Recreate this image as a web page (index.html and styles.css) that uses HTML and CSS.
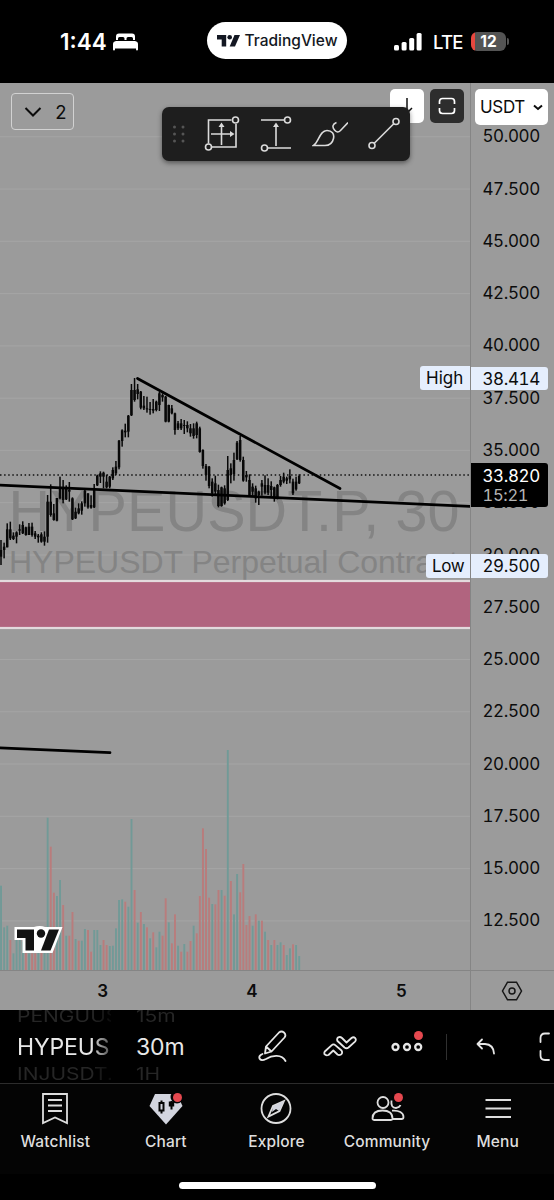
FILE: index.html
```
<!DOCTYPE html>
<html lang="en">
<head>
<meta charset="utf-8">
<title>HYPEUSDT.P</title>
<link rel="stylesheet" href="styles.css">
</head>
<body>
<div class="phone">
    <div class="status">
        <div class="clock">1:44
            <svg class="solid" width="25" height="18" viewBox="0 0 25 18"><path d="M3 7V3.500Q3 .5 6 .5H19Q22 .5 22 3.500V7H20V5.500Q20 4 18.500 4H15Q13.500 4 13.500 5.500V7H11.500V5.500Q11.500 4 10 4H6.500Q5 4 5 5.500V7Z"/><path d="M3 8H22Q25 8.500 25 11V16.500Q25 17.500 24 17.500Q23 17.500 23 16.500V15.500H2V16.500Q2 17.500 1 17.500Q0 17.500 0 16.500V11Q0 8.500 3 8Z"/></svg>
        </div>
        <div class="pill">
            <svg class="solid" width="23" height="12" viewBox="0 0 23 12"><path d="M0 0H9.200V11.500H4.700V4.500H0Z"/><circle cx="12.700" cy="2.300" r="2.300"/><path d="M17.500 0H23L18 11.500H12.700Z"/></svg>
            <span>TradingView</span>
        </div>
        <div class="signal">
            <svg class="solid" width="28" height="18" viewBox="0 0 28 18"><rect y="12" width="5" height="5.500" rx="1.500"/><rect x="7.600" y="9" width="5" height="8.500" rx="1.500"/><rect x="15.200" y="5" width="5" height="12.500" rx="1.500"/><rect x="22.600" y="0" width="5" height="17.500" rx="1.500"/></svg>
            <span>LTE</span>
            <div class="battery">12</div>
        </div>
    </div>

    <div class="chart">
        <div class="pane">
            <!-- drawn in screen coordinates, the pane starts at y = 83 -->
            <svg id="plot" width="470" height="887" viewBox="0 83 470 887">
                <g id="grid" stroke="#a5a5a5" stroke-width="1"></g>
                <g class="watermark">
                    <text x="8.500" y="531" font-size="57.500" textLength="451">HYPEUSDT.P, 30</text>
                    <text x="9" y="573" font-size="32" textLength="449">HYPEUSDT Perpetual Contract</text>
                </g>
                <rect x="-5" y="581" width="480" height="47" fill="#b1647f" stroke="#e3dadd" stroke-width="2.200"/>
                <g id="volume"></g>
                <path d="M0 475H470" stroke="#111" stroke-width="1.400" stroke-dasharray="1.500 2.600"/>
                <g id="candles"></g>
                <g stroke="#000" stroke-width="2.700" stroke-linecap="round">
                    <path d="M137.500 378.500L340 488.500"/>
                    <path d="M-2 485L470 506.300"/>
                    <path d="M-2 747.800L110 752.600"/>
                </g>
                <path d="M14.500 927H34Q40 925 45 927H62.500L52.500 953H22.500V940H14.500Z" fill="#fff"/>
                <g fill="#131313"><path d="M17 929.500H34V950.500H25.500V938H17Z"/><circle cx="41" cy="933.500" r="4.200"/><path d="M49 929.500H59L50.500 950.500H41Z"/></g>
            </svg>
            <button class="collapse"><svg width="18" height="12" viewBox="0 0 18 12"><path d="M1.500 2L9 9.500L16.500 2"/></svg>2</button>
            <button class="square down"><svg width="16" height="18" viewBox="0 0 16 18"><path d="M8 1V16M3 11L8 16L13 11"/></svg></button>
            <button class="square full"><svg width="18" height="18" viewBox="0 0 18 18"><path d="M1.500 7V4.500Q1.500 1.500 4.500 1.500H13.500Q16.500 1.500 16.500 4.500V7M1.500 11V13.500Q1.500 16.500 4.500 16.500H13.500Q16.500 16.500 16.500 13.500V11"/></svg></button>
            <span class="tag high">High</span>
            <span class="tag low">Low</span>
            <div class="tools">
                <svg class="grip" width="14" height="20" viewBox="0 0 14 20"><circle cx="2.500" cy="3" r="1.500"/><circle cx="11" cy="3" r="1.500"/><circle cx="2.500" cy="10" r="1.500"/><circle cx="11" cy="10" r="1.500"/><circle cx="2.500" cy="17" r="1.500"/><circle cx="11" cy="17" r="1.500"/></svg>
                <svg width="36" height="36" viewBox="0 0 36 36"><path d="M27.500 4H4.500V27.500M8 31H32V8M17.500 29V10M7 18H27"/><circle cx="31.500" cy="4" r="3"/><circle cx="4.500" cy="31" r="3"/><path class="tip" d="M14.500 11L17.500 6.500L20.500 11ZM26 15L30.500 18L26 21Z"/></svg>
                <svg width="36" height="36" viewBox="0 0 36 36"><path d="M3 4H26M9 32H33M18 30V10"/><circle cx="29.500" cy="4" r="3"/><circle cx="6.500" cy="32" r="3"/><path class="tip" d="M15 11L18 6.500L21 11Z"/></svg>
                <svg width="36" height="36" viewBox="0 0 36 36"><path d="M1.500 29.500C7 26 7.500 14.500 15 14.500C20 14.500 22.500 18 21.500 22.500C20.500 27 17 29.500 13 29.500ZM24.500 6.500C20.500 8 20 11 22.500 14C24.500 16.500 26.500 16.500 28.500 14.500L36 6.500"/></svg>
                <svg width="36" height="36" viewBox="0 0 36 36"><path d="M8 27.500L28 7.500"/><circle cx="6" cy="29.500" r="3"/><circle cx="30" cy="5.500" r="3"/></svg>
            </div>
        </div>
        <div class="scale">
            <div class="prices" id="prices"></div>
            <button class="currency">USDT<svg width="10" height="7" viewBox="0 0 10 7"><path d="M1 1.500L5 5L9 1.500"/></svg></button>
            <span class="tag pr p-high">38.414</span>
            <span class="tag pr p-low">29.500</span>
            <div class="last">33.820<small>15:21</small></div>
        </div>
        <div class="days"><b>3</b><b>4</b><b>5</b></div>
        <div class="gear"><svg width="22" height="20" viewBox="0 0 22 20"><path d="M6.500 1.200H15.500L20.500 10L15.500 18.800H6.500L1.500 10Z"/><circle cx="11" cy="10" r="3"/></svg></div>
    </div>

    <div class="bar">
        <div class="wheel symbols"><i>PENGUUSDT</i><span>HYPEUSDT</span><i>INJUSDT.P</i></div>
        <div class="wheel times"><i>15m</i><span>30m</span><i>1H</i></div>
        <svg class="pencil" width="30" height="32" viewBox="0 0 30 32"><path d="M7 23.500L8 16.500L21 2.500Q23.500 .5 26 2.500Q28.500 5 26.500 7.500L13.500 21.500ZM8 16.500L13.500 21.500M4.500 24Q.5 25.500 1.500 28.500Q3 31.500 8 29C14 25 24 24 27.500 31"/></svg>
        <svg class="waves" width="34" height="21" viewBox="0 0 34 21"><path d="M1.800 15.500L8.500 9.300Q10.500 7.500 12.500 9.300L18.500 14.500Q20 17 18 18.500Q16 19.700 14.500 18.500L10.300 14.500L5.500 19Q3 20 1.500 18.200Q1 16.700 1.800 15.500ZM14.500 5Q13.500 3 15 1.500Q17 .3 19 2L23.500 6.500L28.500 2Q30.500 .5 32.300 2.200Q33.500 4 32 5.700L25.500 11.500Q23.500 13 21.500 11.500Z"/></svg>
        <div class="dots"><svg width="32" height="10" viewBox="0 0 32 10"><circle cx="4.500" cy="5" r="3"/><circle cx="16" cy="5" r="3"/><circle cx="27.200" cy="5" r="3"/></svg><em class="badge"></em></div>
        <div class="sep"></div>
        <svg class="undo" width="20" height="17" viewBox="0 0 20 17"><path d="M6 1.500L1.500 6L6 10.500M1.500 6H9Q17.500 6.500 18 15.500"/></svg>
        <svg class="expand" width="30" height="30" viewBox="0 0 30 30"><path d="M1.500 10V6Q1.500 1.500 6 1.500H10M1.500 19V23.500Q1.500 28 6 28H10"/></svg>
    </div>

    <div class="nav">
        <a><svg width="36" height="34" viewBox="0 0 36 34"><path d="M6 2H30V31L18 25.500L6 31ZM11 8H25M11 13.500H25M11 19H25"/></svg>Watchlist</a>
        <a><svg width="36" height="34" viewBox="0 0 36 34"><path class="fill" d="M7 2H29L34.500 14L18 32.500L1.500 14Z"/><path class="cut" d="M11.500 11H15.500V18.500H11.500ZM13.500 8.500V11M13.500 18.500V21.500M23.500 9V17.500"/><path class="cut dark" d="M21.800 10.500H25.200V13.500H21.800Z"/><circle class="dark" cx="29" cy="5" r="6.500"/></svg>Chart<em class="badge"></em></a>
        <a><svg width="36" height="34" viewBox="0 0 36 34"><circle cx="18" cy="16.500" r="14.500"/><path d="M26 9L21.500 19L10.500 24.500L15 14Z"/><path class="fill" d="M26 9L21 19L18 17L14 20L15 14Z"/></svg>Explore</a>
        <a><svg width="36" height="34" viewBox="0 0 36 34"><circle cx="14" cy="10.500" r="5.500"/><path d="M3.500 26.500C3.500 21 7 18.500 13.500 18.500S23.500 21 23.500 26.500Q23.500 28 22 28H5.500Q3.500 28 3.500 26.500ZM22.500 8.500Q21.500 16 27 16Q30.500 15.500 31.500 13M23 18.700C30 18 34.500 21 34.500 25Q34.500 27 32.500 27H24"/><circle class="dark" cx="29" cy="5" r="6"/></svg>Community<em class="badge"></em></a>
        <a><svg width="36" height="34" viewBox="0 0 36 34"><path d="M5.500 8H31M5.500 16.500H31M5.500 25H31"/></svg>Menu</a>
    </div>
    <div class="home"></div>
</div>
<script src="chart.js"></script>
</body>
</html>
```
FILE: styles.css
```
* { box-sizing: border-box; }
body {
    margin: 0;
    background: #000;
    font-family: Inter, "Liberation Sans", sans-serif;
}
button { border: 0; padding: 0; font: inherit; }
svg { display: block; fill: none; flex: none; }
.solid { fill: currentColor; }
.phone {
    width: 554px;
    height: 1200px;
    overflow: hidden;
    display: flex;
    flex-direction: column;
    color: #fff;
}

/* status bar */
.status {
    height: 83px;
    padding: 0 44px 0 60px;
    display: flex;
    align-items: center;
    flex: none;
}
.clock, .signal { display: flex; align-items: center; }
.clock { width: 147px; gap: 6px; font-size: 22.500px; font-weight: 600; }
.pill {
    width: 140px;
    height: 37px;
    margin-top: -2px;
    border-radius: 19px;
    background: #fff;
    color: #131722;
    display: flex;
    align-items: center;
    justify-content: center;
    gap: 5px;
    font-size: 15.500px;
    font-weight: 500;
}
.signal { width: 116px; margin-left: auto; gap: 11px; font-size: 18.500px; font-weight: 500; }
.signal span { width: 27px; letter-spacing: -0.8px; }
.battery {
    width: 35px;
    height: 19px;
    position: relative;
    border-radius: 6px;
    background: linear-gradient(90deg, #e8483f 4.500px, #545454 4.500px);
    font-size: 15.500px;
    font-weight: 700;
    line-height: 19px;
    text-align: center;
}
.battery:after {
    content: "";
    position: absolute;
    left: 36px;
    top: 6px;
    width: 2px;
    height: 7px;
    border-radius: 0 2px 2px 0;
    background: #545454;
}

/* chart */
.chart {
    height: 927px;
    flex: none;
    display: grid;
    grid-template-columns: 470px 84px;
    grid-template-rows: 887px 40px;
    background: #9b9b9b;
    color: #0c0c0c;
}
.pane, .scale { position: relative; }
.scale, .gear { border-left: 1px solid #858585; }
.days, .gear { border-top: 1px solid #858585; }
.watermark { fill: #848484; font-family: "Liberation Sans", sans-serif; }
.collapse {
    position: absolute;
    left: 11px;
    top: 10px;
    width: 63px;
    height: 37px;
    padding-left: 6px;
    border: 1.500px solid #d2d2d2;
    border-radius: 4px;
    background: none;
    color: #0c0c0c;
    display: flex;
    align-items: center;
    justify-content: center;
    gap: 13px;
    font-size: 18.500px;
}
.collapse svg, .currency svg { stroke: #0c0c0c; stroke-width: 2; }
.square {
    position: absolute;
    top: 6px;
    width: 34px;
    height: 34px;
    border-radius: 5px;
    display: grid;
    place-items: center;
}
.down { left: 390px; background: #fff; }
.down svg { stroke: #111; stroke-width: 1.500; }
.full { left: 430px; background: #2d2d2d; }
.full svg { stroke: #fff; stroke-width: 1.700; }
.tools {
    position: absolute;
    left: 162px;
    top: 24px;
    width: 248px;
    height: 54px;
    padding: 0 8px 0 10px;
    border-radius: 7px;
    background: #1e1e1e;
    box-shadow: 0 2px 5px rgba(0,0,0,0.45);
    display: flex;
    align-items: center;
    justify-content: space-between;
}
.tools svg { stroke: #dbdbdb; stroke-width: 1.600; }
.tools .tip { fill: #dbdbdb; stroke: none; }
.tools .grip { fill: #555; stroke: none; }

.prices {
    height: 887px;
    padding-top: 27.400px;
    overflow: hidden;
    font-size: 17px;
    line-height: 52.270px;
    font-variant-numeric: tabular-nums;
    letter-spacing: -0.4px;
    padding-left: 11.500px;
}
.prices div { height: 52.270px; }
.currency {
    position: absolute;
    left: 4px;
    top: 6px;
    width: 73px;
    height: 36px;
    border-radius: 5px;
    background: #fff;
    color: #0c0c0c;
    display: flex;
    align-items: center;
    justify-content: center;
    gap: 8px;
    font-size: 17px;
    letter-spacing: -0.3px;
}
.tag {
    position: absolute;
    height: 24px;
    line-height: 24px;
    background: #e5eefd;
    font-size: 17px;
    border-radius: 3px 0 0 3px;
    padding-left: 6px;
}
.high { left: 420px; top: 283px; width: 50px; }
.low { left: 426px; top: 471px; width: 44px; letter-spacing: -0.4px; }
.pr, .last {
    left: 0;
    width: 77px;
    padding-left: 11.500px;
    border-radius: 0 3px 3px 0;
    font-variant-numeric: tabular-nums;
    letter-spacing: -0.4px;
}
.p-high { top: 284px; height: 23px; }
.p-low { top: 471px; }
.last {
    position: absolute;
    top: 380px;
    height: 44px;
    padding-top: 3px;
    background: #000;
    color: #fff;
    font-size: 17px;
    line-height: 20px;
}
.last small { display: block; color: #b5b5b5; font-size: 16.500px; line-height: 19px; letter-spacing: -0.3px; }
.days {
    display: grid;
    grid-template-columns: repeat(3, 149.300px);
    padding-left: 28px;
    align-items: center;
    justify-items: center;
    font-size: 17px;
}
.days b { font-weight: 600; }
.gear { display: grid; place-items: center; }
.gear svg { stroke: #161616; stroke-width: 1.500; margin-right: 1px; }

/* bottom toolbar */
.bar {
    height: 74px;
    padding-left: 17px;
    display: flex;
    align-items: center;
    flex: none;
    overflow: hidden;
    border-bottom: 1px solid #2c2c2c;
}
.bar svg { stroke: #e6e6e6; stroke-width: 1.800; stroke-linejoin: round; stroke-linecap: round; }
.wheel { height: 73px; flex: none; overflow: hidden; font-size: 23px; color: #e8e8e8; }
.wheel span, .wheel i { display: block; }
.wheel span { height: 37px; line-height: 39px; letter-spacing: -0.1px; }
.wheel i {
    height: 18px;
    line-height: 20px;
    font-style: normal;
    font-size: 21px;
    color: #262626;
    transform: scaleY(.8);
}
.wheel i:first-child { line-height: 11px; }
.symbols {
    width: 94px;
    margin-right: 25px;
    -webkit-mask-image: linear-gradient(90deg, #000 74px, rgba(0,0,0,0.3) 94px);
    mask-image: linear-gradient(90deg, #000 74px, rgba(0,0,0,0.3) 94px);
}
.times { width: 60px; }
.pencil { margin-left: 62px; margin-top: -1px; }
.waves { margin-left: 35px; margin-top: -1px; }
.dots { position: relative; margin-left: 34px; flex: none; }
.bar .dots svg { stroke-width: 2.300; }
.badge {
    position: absolute;
    width: 9px;
    height: 9px;
    border-radius: 50%;
    background: #e5484f;
}
.dots .badge { left: 23px; top: -11px; }
.sep { width: 1px; height: 26px; margin-left: 23px; flex: none; background: #303030; }
.undo { margin-left: 29px; }
.expand { margin-left: 43px; }

/* tabs */
.nav {
    height: 90px;
    flex: none;
    display: grid;
    grid-template-columns: repeat(5, 110.600px);
    background: #040404;
}
.nav a {
    position: relative;
    padding-top: 8px;
    display: flex;
    flex-direction: column;
    align-items: center;
    gap: 6px;
    font-size: 15.500px;
    font-weight: 500;
    letter-spacing: 0.15px;
    line-height: 20px;
    color: #dedede;
}
.nav svg { stroke: #dedede; stroke-width: 1.800; }
.nav .fill { fill: #d3d5df; stroke: none; }
.nav .cut { stroke: #040404; stroke-width: 2; }
.nav .dark { fill: #040404; }
.nav circle.dark { stroke: none; }
.nav .badge { left: 62px; top: 9px; }
.home { width: 197px; height: 7px; margin: 8px auto 0; border-radius: 4px; background: #fff; }
```
FILE: chart.js
```
var X0 = 1, STEP = 3.106;

// wick top, wick bottom, body top, body bottom; thirds of a pixel below y = 360
var bars = [
    [540,615,570,590],[548,595,560,570],[490,562,508,562],[485,540,508,535],[517,540,527,537],[514,550,517,530],
    [493,525,508,512],[484,522,495,520],[500,527,502,525],[489,525,500,525],[488,530,500,525],[513,537,520,530],
    [522,548,527,532],[517,548,523,545],[514,557,530,545],[405,548,425,530],[373,470,425,465],[432,482,460,480],
    [414,484,414,482],[350,418,385,415],[360,430,385,420],[376,420,385,418],[366,425,390,395],[412,480,415,478],
    [443,477,455,475],[430,463,445,460],[424,464,430,452],[390,440,392,430],[400,446,400,442],[406,446,435,443],
    [372,444,388,442],[344,378,347,376],[334,369,340,350],[335,385,338,350],[344,385,365,382],[348,385,350,380],
    [322,360,330,355],[303,345,320,340],[240,328,242,322],[208,260,211,243],[191,232,212,217],[165,232,167,215],
    [72,168,90,166],[54,125,90,120],[72,118,88,102],[93,148,95,143],[108,150,137,145],[110,158,145,148],
    [126,164,147,150],[117,160,147,152],[122,154,125,150],[96,153,100,135],[100,125,105,112],[108,187,110,185],
    [134,187,135,185],[135,163,145,160],[158,224,160,210],[183,210,190,205],[177,210,190,205],[180,222,195,198],
    [184,217,195,205],[192,230,205,220],[190,236,205,228],[185,235,190,225],[200,278,205,276],[268,326,270,318],
    [312,362,318,345],[318,385,320,378],[355,410,365,400],[347,405,370,395],[374,442,390,438],[380,440,382,438],
    [376,434,385,430],[288,423,330,420],[310,370,325,345],[278,362,300,342],[243,300,248,298],[228,305,240,300],
    [290,365,300,362],[333,365,345,352],[343,407,360,405],[370,407,380,395],[377,428,385,415],[392,435,395,405],
    [360,407,370,380],[346,403,375,398],[355,405,375,398],[364,408,378,390],[380,425,382,412],[372,418,375,412],
    [348,380,360,375],[338,370,350,365],[350,372,355,362],[328,370,348,358],[356,405,365,400],[350,392,365,388],
    [343,372,348,370]
];

// bar tops in thirds of a pixel below y = 740
var vol = ('437g 562g 557g 600r 640g 600g 600g 605g 620r 640g 640r 640r 630g 620r 614g 233g 320r 458r 468g 420g ' +
    '495r 587g 587r 516r 597g 602r 602g 567g 570r 635r 570g 570g 615g 600r 615r 618g 617g 565g 480g 478g ' +
    '485r 500g 237g 450r 548g 516r 552g 562r 595g 577r 622g 575g 587r 475r 547g 610r 523r 617g 635r 612g ' +
    '635r 603r 557g 580r 468r 265r 327r 473r 492g 493r 450r 450g 467r 30g 423r 523g 402g 457r 372r 555r ' +
    '528r 557g 523r 542g 542r 575g 600r 615g 600r 615g 607g 615r 645g 625g 613r 615g 648g').split(' ');

function rect(x, y, w, h, fill) {
    return '<rect x="' + x.toFixed(2) + '" y="' + y.toFixed(2) + '" width="' + w + '" height="' + h.toFixed(2) + '" fill="' + fill + '"/>';
}

var out = '';
bars.forEach(function (b, i) {
    var x = X0 + i * STEP;
    out += rect(x - 0.75, 360 + b[0] / 3, 1.5, (b[1] - b[0]) / 3, '#080808');
    out += rect(x - 1.25, 360 + b[2] / 3, 2.5, (b[3] - b[2]) / 3, '#080808');
});
document.getElementById('candles').innerHTML = out;

out = '';
vol.forEach(function (v, i) {
    var top = 740 + parseInt(v, 10) / 3;
    out += rect(X0 + i * STEP - 0.9, top, 1.9, 970 - top, v.slice(-1) == 'g' ? '#719a97' : '#b97c7c');
});
document.getElementById('volume').innerHTML = out;

var grid = '', prices = '';
for (var i = 0; i < 16; i++) {
    var y = 136.8 + i * 52.27;
    grid += '<path d="M0 ' + y.toFixed(1) + 'H470"/>';
    prices += '<div>' + (50 - i * 2.5).toFixed(3) + '</div>';
}
document.getElementById('grid').innerHTML = grid;
document.getElementById('prices').innerHTML = prices;
```
